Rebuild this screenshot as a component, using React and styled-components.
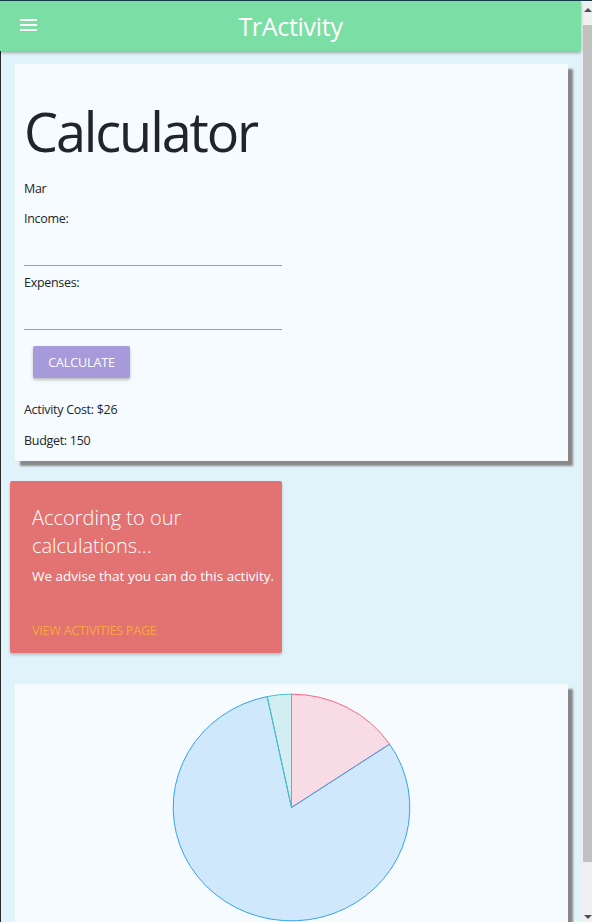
import React from "react";
import styled, { createGlobalStyle } from "styled-components";

const GlobalStyle = createGlobalStyle`
  html, body {
    margin: 0;
    padding: 0;
    height: 100%;
    overflow: hidden;
  }
  body {
    font-family: "Open Sans", "Noto Sans", sans-serif;
    background: #e0f3fb;
    color: #212529;
  }
`;

const slices = [
  { value: 26, fill: "rgba(255,99,132,0.2)", stroke: "rgb(255,99,132)" },
  { value: 135.6, fill: "rgba(54,162,235,0.2)", stroke: "rgb(54,162,235)" },
  { value: 5.5, fill: "rgba(75,192,192,0.2)", stroke: "rgb(75,192,192)" },
];

const PieChart = () => {
  const total = slices.reduce((s, d) => s + d.value, 0);
  let start = 0;
  const r = 100;
  const pt = (a) => [
    100 + r * Math.sin(a * 2 * Math.PI),
    100 - r * Math.cos(a * 2 * Math.PI),
  ];
  return (
    <ChartSvg viewBox="-1 -1 202 202" preserveAspectRatio="none">
      {slices.map((d, i) => {
        const frac = d.value / total;
        const [x1, y1] = pt(start);
        const [x2, y2] = pt(start + frac);
        const large = frac > 0.5 ? 1 : 0;
        start += frac;
        return (
          <path
            key={i}
            d={`M100 100 L${x1} ${y1} A${r} ${r} 0 ${large} 1 ${x2} ${y2} Z`}
            fill={d.fill}
            stroke={d.stroke}
            strokeWidth="1"
            vectorEffect="non-scaling-stroke"
          />
        );
      })}
    </ChartSvg>
  );
};

const App = () => (
  <Layout>
    <GlobalStyle />
    <Page>
      <Header>
        <MenuButton>
          <svg width="17" height="12" viewBox="0 0 17 12">
            <rect x="0" y="0" width="17" height="2" fill="#fff" />
            <rect x="0" y="5" width="17" height="2" fill="#fff" />
            <rect x="0" y="10" width="17" height="2" fill="#fff" />
          </svg>
        </MenuButton>
        <Title>TrActivity</Title>
        <span />
      </Header>
      <Main>
        <Panel>
          <Heading>Calculator</Heading>
          <Label top={15}>Mar</Label>
          <Label top={9}>Income:</Label>
          <Field />
          <Label top={6}>Expenses:</Label>
          <Field />
          <Button>CALCULATE</Button>
          <Label top={21}>Activity Cost: $26</Label>
          <Label top={10}>Budget: 150</Label>
        </Panel>
        <Advice>
          <AdviceBody>
            <AdviceTitle>According to our calculations...</AdviceTitle>
            <AdviceText>We advise that you can do this activity.</AdviceText>
          </AdviceBody>
          <AdviceAction>VIEW ACTIVITIES PAGE</AdviceAction>
        </Advice>
        <ChartPanel>
          <PieChart />
        </ChartPanel>
      </Main>
    </Page>
    <ScrollTrack>
      <Arrow />
      <Thumb />
      <Arrow down />
    </ScrollTrack>
  </Layout>
);

export default App;

const Layout = styled.div`
  display: flex;
  height: 922px;
  border-top: 1px solid #15384a;
  box-sizing: border-box;
  overflow: hidden;
`;

const Page = styled.div`
  width: 581px;
  display: flex;
  flex-direction: column;
`;

const Header = styled.header`
  height: 50px;
  flex-shrink: 0;
  background: #7bdea5;
  display: grid;
  grid-template-columns: 1fr auto 1fr;
  align-items: center;
  box-shadow: 0 2px 3px rgba(0, 0, 0, 0.3);
  position: relative;
  z-index: 1;
`;

const MenuButton = styled.div`
  display: flex;
  padding-left: 20px;
  padding-bottom: 2px;
`;

const Title = styled.h1`
  margin: 0;
  font-weight: 400;
  font-size: 25px;
  color: #fff;
  letter-spacing: -0.3px;
`;

const Main = styled.main`
  flex: 1;
  border-left: 1px solid #2a2a2a;
  padding: 13px 13px 0 14px;
  display: flex;
  flex-direction: column;
  align-items: flex-start;
`;

const Panel = styled.section`
  align-self: stretch;
  background: #f6fbff;
  box-shadow: 5px 5px 2px #888;
  padding: 35px 9px 10px;
  display: flex;
  flex-direction: column;
  align-items: flex-start;
`;

const Heading = styled.h2`
  margin: 0;
  font-weight: 400;
  font-size: 54px;
  line-height: 64px;
  letter-spacing: -2.1px;
  color: #212529;
`;

const Label = styled.p`
  margin: ${(p) => p.top}px 0 0;
  padding-top: 1px;
  font-size: 12.5px;
  line-height: 20px;
  letter-spacing: -0.3px;
  color: #212529;
`;

const Field = styled.div`
  width: 258px;
  height: 36px;
  border-bottom: 1px solid #9e9e9e;
`;

const Button = styled.button`
  margin: 16px 0 0 9px;
  width: 97px;
  height: 32px;
  border: none;
  border-radius: 2px;
  background: #a69adb;
  color: #fff;
  font-family: inherit;
  font-size: 12.5px;
  letter-spacing: -0.1px;
  box-shadow: 0 2px 3px rgba(0, 0, 0, 0.25);
`;

const Advice = styled.section`
  margin: 20px 0 0 -5px;
  width: 272px;
  background: #e37272;
  border-radius: 2px;
  box-shadow: 0 2px 3px rgba(0, 0, 0, 0.2);
`;

const AdviceBody = styled.div`
  padding: 23px 22px 19px;
  border-bottom: 1px solid rgba(160, 160, 160, 0.2);
`;

const AdviceTitle = styled.h3`
  margin: 0;
  font-weight: 300;
  font-size: 20px;
  line-height: 28px;
  color: #fff;
`;

const AdviceText = styled.p`
  margin: 6px 0 0;
  font-size: 13.5px;
  line-height: 20px;
  white-space: nowrap;
  color: #fff;
`;

const AdviceAction = styled.div`
  padding: 14px 22px 13px;
  font-size: 12.7px;
  line-height: 20px;
  letter-spacing: -0.3px;
  color: #f7a740;
`;

const ChartPanel = styled.section`
  margin-top: 31px;
  align-self: stretch;
  height: 280px;
  flex-shrink: 0;
  background: #f6fbff;
  box-shadow: 5px 5px 2px #888;
  padding-top: 9px;
  display: flex;
  justify-content: center;
  align-items: flex-start;
`;

const ChartSvg = styled.svg`
  width: 239px;
  height: 229px;
  overflow: visible;
`;

const ScrollTrack = styled.div`
  width: 11px;
  background: #f0f0f0;
  display: flex;
  flex-direction: column;
  align-items: flex-end;
`;

const Arrow = styled.div`
  width: 9px;
  height: 24px;
  display: flex;
  align-items: ${(p) => (p.down ? "flex-end" : "flex-start")};
  justify-content: center;
  padding: ${(p) => (p.down ? "0 0 3px" : "7px 0 0")};
  box-sizing: border-box;
  margin-top: ${(p) => (p.down ? "auto" : "0")};
  &::before {
    content: "";
    border-left: 4px solid transparent;
    border-right: 4px solid transparent;
    ${(p) =>
      p.down
        ? "border-top: 4px solid #505050;"
        : "border-bottom: 4px solid #505050;"}
  }
`;

const Thumb = styled.div`
  width: 9px;
  height: 837px;
  background: #c1c1c1;
`;
